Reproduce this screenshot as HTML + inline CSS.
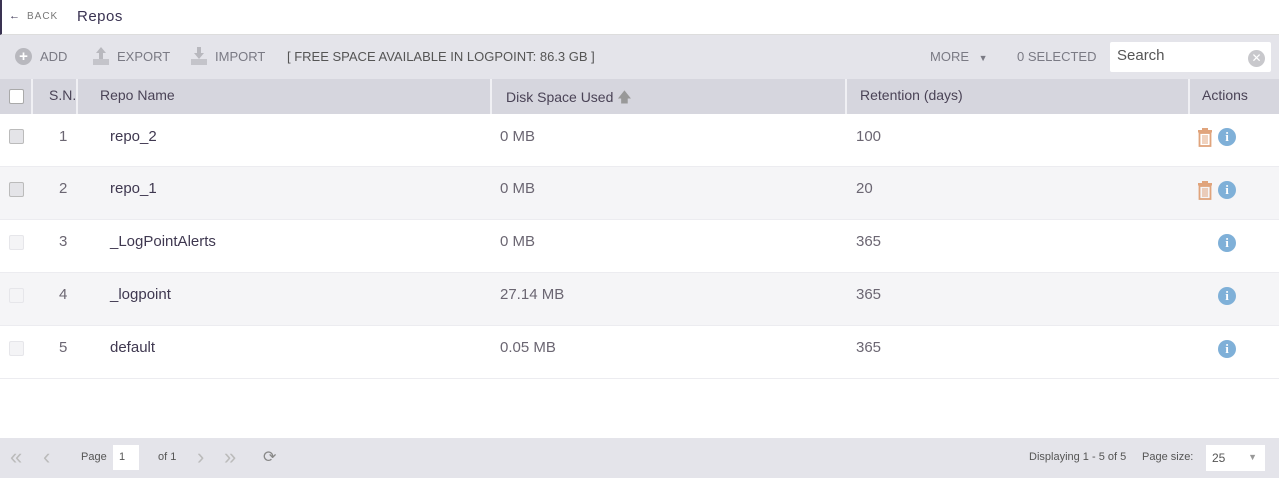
<!DOCTYPE html>
<html><head><style>
*{box-sizing:border-box;margin:0;padding:0}
body{width:1279px;height:478px;background:#fff;font-family:"Liberation Sans",sans-serif;position:relative;overflow:hidden;color:#4a4356}
.abs{position:absolute}
.top{left:0;top:0;width:1279px;height:35px;background:#fff;border-left:2px solid #3a3352;border-bottom:1px solid #ddd}
.tb{left:0;top:35px;width:1279px;height:44px;background:#e4e4ea;font-size:13px;color:#7a7a84}
.hd{left:0;top:79px;width:1279px;height:35px;background:#d6d6de;font-size:14px;color:#4a4356}
.row{left:0;width:1279px;height:53px;border-bottom:1px solid #ececf0;font-size:15px;color:#6b6672}
.alt{background:#f5f5f7}
.cb{position:absolute;left:9px;width:15px;height:15px;border:1px solid #bbb;background:#e4e4e8;border-radius:2px}
.cbf{background:#f4f4f6;border-color:#e6e6ea}
.sep{position:absolute;top:0;width:2px;height:35px;background:#f0f0f4}
.ft{left:0;top:438px;width:1279px;height:40px;background:#e4e4ea;font-size:11px;color:#555}
.info{position:absolute;left:1218px;top:14px;width:18px;height:18px;border-radius:50%;background:#7fb0d8;color:#fff;font:bold 13px/18px 'Liberation Serif',serif;text-align:center}
.tr{position:absolute;left:1197px;top:14px}
</style></head><body>
<div class="abs top">
 <span class="abs" style="left:7px;top:10px;font-size:11px;color:#3a3352">&#8592;</span>
 <span class="abs" style="left:25px;top:11px;font-size:10px;letter-spacing:1px;color:#777">BACK</span>
 <span class="abs" style="left:75px;top:8px;font-size:15px;color:#3a3352;letter-spacing:.5px">Repos</span>
</div>
<div class="abs tb">
 <span class="abs" style="left:15px;top:13px;width:17px;height:17px;border-radius:50%;background:#b8b8be;color:#fff;font-size:15px;line-height:17px;text-align:center;font-weight:bold">+</span>
 <span class="abs" style="left:40px;top:14px">ADD</span>
 <svg class="abs" style="left:92px;top:11px" width="18" height="20" viewBox="0 0 18 20"><path d="M9 1L4 7h3v6h4V7h3z" fill="#b8b8be"/><rect x="1" y="13" width="16" height="6" fill="#c4c4ca"/></svg>
 <span class="abs" style="left:117px;top:14px">EXPORT</span>
 <svg class="abs" style="left:190px;top:11px" width="18" height="20" viewBox="0 0 18 20"><path d="M9 13L4 7h3V1h4v6h3z" fill="#b8b8be"/><rect x="1" y="13" width="16" height="6" fill="#c4c4ca"/></svg>
 <span class="abs" style="left:215px;top:14px">IMPORT</span>
 <span class="abs" style="left:287px;top:14px;color:#555">[ FREE SPACE AVAILABLE IN LOGPOINT: 86.3 GB ]</span>
 <span class="abs" style="left:930px;top:14px">MORE <span style="font-size:9px;margin-left:6px">&#9660;</span></span>
 <span class="abs" style="left:1017px;top:14px">0 SELECTED</span>
 <div class="abs" style="left:1110px;top:7px;width:161px;height:30px;background:#fff;border-radius:2px">
  <span class="abs" style="left:7px;top:5px;font-size:15px;color:#555">Search</span>
  <span class="abs" style="left:138px;top:8px;width:17px;height:17px;border-radius:50%;background:#c8c8cc;color:#fff;font-size:12px;line-height:17px;text-align:center">&#10005;</span>
 </div>
</div>
<div class="abs hd">
 <div class="cb" style="top:10px;background:#fff;border-color:#aaa"></div>
 <div class="sep" style="left:31px"></div>
 <span class="abs" style="left:49px;top:8px">S.N.</span>
 <div class="sep" style="left:76px"></div>
 <span class="abs" style="left:100px;top:8px">Repo Name</span>
 <div class="sep" style="left:490px"></div>
 <span class="abs" style="left:506px;top:8px">Disk Space Used <span style="color:#999">&#129093;</span></span>
 <div class="sep" style="left:845px"></div>
 <span class="abs" style="left:860px;top:8px">Retention (days)</span>
 <div class="sep" style="left:1188px"></div>
 <span class="abs" style="left:1202px;top:8px">Actions</span>
</div>
<div class="abs row" style="top:114px"><div class="cb" style="top:15px"></div><span class="abs" style="left:59px;top:14px">1</span><span class="abs" style="left:110px;top:14px;color:#3f3850">repo_2</span><span class="abs" style="left:500px;top:14px">0 MB</span><span class="abs" style="left:856px;top:14px">100</span>
<svg class="tr" width="16" height="19" viewBox="0 0 16 19"><rect x="1" y="2" width="14" height="2.5" fill="#e0a47c"/><rect x="5" y="0" width="6" height="2.5" fill="#e0a47c"/><rect x="2.5" y="5" width="11" height="13" fill="none" stroke="#e0a47c" stroke-width="1.8"/><path d="M6 7v9M8 7v9M10 7v9" stroke="#e0a47c" stroke-width="1"/></svg><span class="info">i</span></div>
<div class="abs row alt" style="top:167px"><div class="cb" style="top:15px"></div><span class="abs" style="left:59px;top:13px">2</span><span class="abs" style="left:110px;top:13px;color:#3f3850">repo_1</span><span class="abs" style="left:500px;top:13px">0 MB</span><span class="abs" style="left:856px;top:13px">20</span>
<svg class="tr" width="16" height="19" viewBox="0 0 16 19"><rect x="1" y="2" width="14" height="2.5" fill="#e0a47c"/><rect x="5" y="0" width="6" height="2.5" fill="#e0a47c"/><rect x="2.5" y="5" width="11" height="13" fill="none" stroke="#e0a47c" stroke-width="1.8"/><path d="M6 7v9M8 7v9M10 7v9" stroke="#e0a47c" stroke-width="1"/></svg><span class="info">i</span></div>
<div class="abs row" style="top:220px"><div class="cb cbf" style="top:15px"></div><span class="abs" style="left:59px;top:13px">3</span><span class="abs" style="left:110px;top:13px;color:#3f3850">_LogPointAlerts</span><span class="abs" style="left:500px;top:13px">0 MB</span><span class="abs" style="left:856px;top:13px">365</span><span class="info">i</span></div>
<div class="abs row alt" style="top:273px"><div class="cb cbf" style="top:15px"></div><span class="abs" style="left:59px;top:13px">4</span><span class="abs" style="left:110px;top:13px;color:#3f3850">_logpoint</span><span class="abs" style="left:500px;top:13px">27.14 MB</span><span class="abs" style="left:856px;top:13px">365</span><span class="info">i</span></div>
<div class="abs row" style="top:326px"><div class="cb cbf" style="top:15px"></div><span class="abs" style="left:59px;top:13px">5</span><span class="abs" style="left:110px;top:13px;color:#3f3850">default</span><span class="abs" style="left:500px;top:13px">0.05 MB</span><span class="abs" style="left:856px;top:13px">365</span><span class="info">i</span></div>
<div class="abs ft">
 <span class="abs" style="left:10px;top:6px;font-size:22px;color:#bbb">&#171;</span>
 <span class="abs" style="left:43px;top:6px;font-size:22px;color:#bbb">&#8249;</span>
 <span class="abs" style="left:81px;top:13px">Page</span>
 <span class="abs" style="left:113px;top:7px;width:26px;height:25px;background:#fff;padding:6px 0 0 6px">1</span>
 <span class="abs" style="left:158px;top:13px">of 1</span>
 <span class="abs" style="left:197px;top:6px;font-size:22px;color:#bbb">&#8250;</span>
 <span class="abs" style="left:224px;top:6px;font-size:22px;color:#bbb">&#187;</span>
 <span class="abs" style="left:263px;top:9px;font-size:16px;color:#888">&#10227;</span>
 <span class="abs" style="left:1029px;top:13px">Displaying 1 - 5 of 5</span>
 <span class="abs" style="left:1142px;top:13px">Page size:</span>
 <div class="abs" style="left:1206px;top:7px;width:59px;height:26px;background:#fff;font-size:12px;padding:6px 0 0 6px">25<span style="position:absolute;right:8px;top:7px;font-size:9px;color:#999">&#9660;</span></div>
</div>
</body></html>
